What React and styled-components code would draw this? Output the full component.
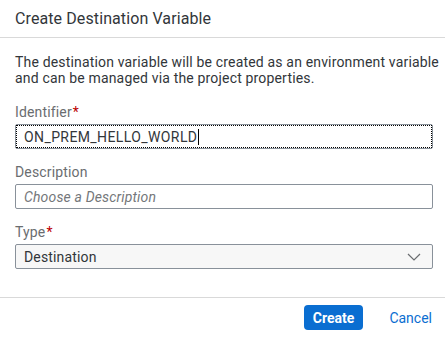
import React from "react";
import styled, { createGlobalStyle } from "styled-components";

const Global = createGlobalStyle`
  html, body { margin: 0; padding: 0; background: #fff; }
  body { font-family: Roboto, "Liberation Sans", sans-serif; color: #32363a; letter-spacing: 0.15px; }
  * { box-sizing: border-box; }
`;

const Dialog = styled.div`
  width: 445px;
  height: 338px;
  display: flex;
  flex-direction: column;
  background: #fff;
`;

const Header = styled.div`
  height: 38px;
  padding: 0 15px;
  display: flex;
  align-items: center;
  border-bottom: 1px solid #d9d9d9;
  font-size: 16px;
  letter-spacing: 0.1px;
  color: #32363a;
`;

const Body = styled.div`
  flex: 1;
  padding: 16px 12px 0 15px;
  display: flex;
  flex-direction: column;
`;

const Intro = styled.p`
  margin: 0 -12px 18px 0;
  font-size: 14px;
  line-height: 16px;
  letter-spacing: 0.17px;
  color: #32363a;
`;

const Field = styled.div`
  display: flex;
  flex-direction: column;
  margin-bottom: 15px;
`;

const Label = styled.label`
  font-size: 14px;
  line-height: 16px;
  color: #6a6d70;
  margin-bottom: 4px;
  display: flex;
  align-items: flex-start;
`;

const Star = styled.span`
  color: #bb0000;
  margin-left: 1px;
`;

const Box = styled.div`
  height: 25px;
  border: 1px solid #89919a;
  border-radius: 2px;
  background: ${(p) => (p.$filled ? "#f7f7f7" : "#fff")};
  display: flex;
  align-items: center;
  padding: ${(p) => (p.$focus ? "1px" : "0")};
`;

const Inner = styled.div`
  flex: 1;
  height: 100%;
  display: flex;
  align-items: center;
  padding: 0 ${(p) => (p.$focus ? "7px" : "8px")};
  outline: ${(p) => (p.$focus ? "1px dotted #000" : "none")};
  font-size: 14px;
  letter-spacing: ${(p) => (p.$focus ? "0.4px" : "0.15px")};
  color: ${(p) => (p.$placeholder ? "#74777a" : "#32363a")};
  font-style: ${(p) => (p.$placeholder ? "italic" : "normal")};
`;

const Caret = styled.span`
  display: inline-block;
  width: 1px;
  height: 16px;
  background: #000;
  margin-left: 1px;
`;

const Chevron = styled.svg`
  width: 14px;
  height: 8px;
  margin-right: 11px;
`;

const Footer = styled.div`
  height: 41px;
  border-top: 1px solid #d9d9d9;
  display: flex;
  align-items: flex-start;
  justify-content: flex-end;
  padding: 7px 13px 0 0;
  gap: 26px;
`;

const Button = styled.button`
  height: 25px;
  padding: 0 ${(p) => (p.$primary ? "9px" : "0")};
  border: none;
  border-radius: 4px;
  background: ${(p) => (p.$primary ? "#0a6ed1" : "transparent")};
  color: ${(p) => (p.$primary ? "#fff" : "#0a6ed1")};
  font-family: inherit;
  font-size: 14px;
  letter-spacing: 0;
  font-weight: ${(p) => (p.$primary ? 700 : 400)};
  cursor: pointer;
`;

export default function App() {
  return (
    <>
      <Global />
      <Dialog>
        <Header>Create Destination Variable</Header>
        <Body>
          <Intro>
            The destination variable will be created as an environment variable
            and can be managed via the project properties.
          </Intro>
          <Field>
            <Label>
              Identifier<Star>*</Star>
            </Label>
            <Box $focus>
              <Inner $focus>
                ON_PREM_HELLO_WORLD
                <Caret />
              </Inner>
            </Box>
          </Field>
          <Field>
            <Label>Description</Label>
            <Box>
              <Inner $placeholder>Choose a Description</Inner>
            </Box>
          </Field>
          <Field>
            <Label>
              Type<Star>*</Star>
            </Label>
            <Box $filled>
              <Inner>Destination</Inner>
              <Chevron viewBox="0 0 14 8">
                <path d="M1 1 L7 7 L13 1" fill="none" stroke="#6a6d70" strokeWidth="1.2" />
              </Chevron>
            </Box>
          </Field>
        </Body>
        <Footer>
          <Button $primary>Create</Button>
          <Button>Cancel</Button>
        </Footer>
      </Dialog>
    </>
  );
}
